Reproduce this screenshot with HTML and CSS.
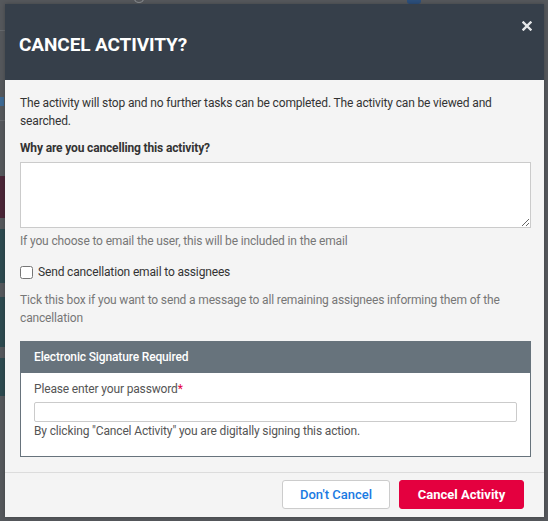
FILE: index.html
```html
<!DOCTYPE html>
<html lang="en">
<head>
<meta charset="utf-8">
<title>Cancel Activity</title>
<link rel="stylesheet" href="styles.css">
</head>
<body>
<div class="backdrop">
  <div class="page-bits">
    <span class="bit bit-line1"></span>
    <span class="bit bit-link"></span>
    <span class="bit bit-line2"></span>
    <span class="bit bit-maroon"></span>
    <span class="bit bit-teal1"></span>
    <span class="bit bit-teal2"></span>
    <span class="bit bit-teal3"></span>
    <span class="bit bit-circle"></span>
    <span class="bit bit-badge"></span>
  </div>
  <div class="modal">
    <div class="modal-header">
      <h1 class="modal-title">CANCEL ACTIVITY?</h1>
      <button class="close" aria-label="Close">
        <svg width="10" height="10" viewBox="0 0 10 10"><path d="M1.5 1.5 L8.5 8.5 M8.5 1.5 L1.5 8.5" stroke="#e6e8ea" stroke-width="2.4" stroke-linecap="square"/></svg>
      </button>
    </div>
    <div class="modal-body">
      <p class="intro">The activity will stop and no further tasks can be completed. The activity can be viewed and searched.</p>
      <label class="field-label">Why are you cancelling this activity?</label>
      <textarea class="reason"></textarea>
      <p class="help">If you choose to email the user, this will be included in the email</p>
      <label class="check-row"><input type="checkbox" class="check"><span>Send cancellation email to assignees</span></label>
      <p class="help tick">Tick this box if you want to send a message to all remaining assignees informing them of the cancellation</p>
      <div class="sig-panel">
        <div class="sig-head">Electronic Signature Required</div>
        <div class="sig-body">
          <div class="pw-label">Please enter your password<span class="req">*</span></div>
          <input type="password" class="pw">
          <div class="sig-note">By clicking "Cancel Activity" you are digitally signing this action.</div>
        </div>
      </div>
    </div>
    <div class="modal-footer">
      <button class="btn btn-secondary">Don't Cancel</button>
      <button class="btn btn-danger">Cancel Activity</button>
    </div>
  </div>
</div>
</body>
</html>
```
FILE: styles.css
```css
* { box-sizing: border-box; }
html, body { margin: 0; padding: 0; }
body {
  width: 548px;
  height: 521px;
  overflow: hidden;
  font-family: Roboto, "Liberation Sans", sans-serif;
  background: #55585d;
}
.backdrop {
  position: relative;
  width: 548px;
  height: 521px;
  padding: 4px 4px 0 5px;
  background: #55585c;
}
.page-bits .bit { position: absolute; display: block; }
.bit-line1 { left: 0; top: 30px; width: 5px; height: 1px; background: #66696d; }
.bit-link { left: 0; top: 97px; width: 4px; height: 9px; background: #3e6a94; }
.bit-line2 { left: 0; top: 120px; width: 5px; height: 1px; background: #65686c; }
.bit-maroon { left: 0; top: 176px; width: 5px; height: 42px; background: #4b2637; }
.bit-teal1 { left: 0; top: 229px; width: 5px; height: 54px; background: #2d4a4f; }
.bit-teal2 { left: 0; top: 297px; width: 5px; height: 50px; background: #2d4a4f; }
.bit-teal3 { left: 0; top: 358px; width: 5px; height: 38px; background: #2d4a4f; }
.bit-circle { left: 134px; top: -6px; width: 10px; height: 9px; border: 1px solid #8a8d90; border-radius: 50%; }
.bit-badge { left: 407px; top: -4px; width: 14px; height: 8px; border-radius: 3px; background: #2c4f7c; }

.modal {
  position: relative;
  width: 539px;
  height: 513px;
  background: #f4f4f4;
  display: flex;
  flex-direction: column;
  box-shadow: 0 0 4px rgba(0,0,0,0.25);
}
.modal-header {
  position: relative;
  height: 76px;
  background: #363f4a;
  display: flex;
  align-items: center;
  padding: 0 14px;
}
.modal-title {
  margin: 4px 0 0;
  color: #fff;
  font-size: 19px;
  font-weight: 700;
  letter-spacing: -0.1px;
}
.close {
  position: absolute;
  right: 11px;
  top: 16px;
  width: 12px;
  height: 12px;
  padding: 0;
  border: 0;
  background: transparent;
  display: flex;
  align-items: center;
  justify-content: center;
}
.modal-body {
  flex: 1;
  padding: 14px 13px 0 15px;
  font-size: 12px;
  line-height: 18px;
  color: #333;
  letter-spacing: -0.15px;
}
.intro { margin: 0; }
.field-label {
  display: block;
  margin-top: 9px;
  font-weight: 700;
  color: #333;
}
.reason {
  display: block;
  width: 511px;
  height: 66px;
  margin-top: 5px;
  border: 1px solid #cbcbcb;
  border-radius: 0;
  background: #fff;
  resize: vertical;
}
.help { margin: 4px 0 0; color: #777; }
.check-row {
  display: flex;
  align-items: center;
  margin-top: 13px;
  color: #333;
  font-size: 12px;
}
.check {
  width: 13px;
  height: 13px;
  margin: 0 5px 0 0;
}
.help.tick { margin-top: 10px; }
.sig-panel {
  margin-top: 14px;
  width: 511px;
  border: 1px solid #67737c;
  background: #fff;
}
.sig-head {
  height: 31px;
  background: #67737c;
  color: #fff;
  font-weight: 500;
  font-size: 12px;
  line-height: 31px;
  padding-left: 13px;
}
.sig-body {
  padding: 7px 13px 16px;
  color: #555;
}
.req { color: #e4003f; }
.pw {
  display: block;
  width: 483px;
  height: 20px;
  margin-top: 4px;
  border: 1px solid #cbcbcb;
  border-radius: 2px;
  background: #fff;
}
.sig-note { margin-top: 0; }
.modal-footer {
  border-top: 1px solid #dcdcdc;
  display: flex;
  justify-content: flex-end;
  gap: 9px;
  padding: 7px 20px 8px;
}
.btn {
  height: 29px;
  border-radius: 3px;
  font-family: Roboto, "Liberation Sans", sans-serif;
  font-size: 13px;
  padding: 0;
  cursor: pointer;
}
.btn-secondary {
  width: 108px;
  background: #fff;
  border: 1px solid #cccccc;
  color: #1a7ae2;
  font-weight: 500;
}
.btn-danger {
  width: 125px;
  background: #e4003f;
  border: 1px solid #e4003f;
  color: #fff;
  font-weight: 700;
}
```
